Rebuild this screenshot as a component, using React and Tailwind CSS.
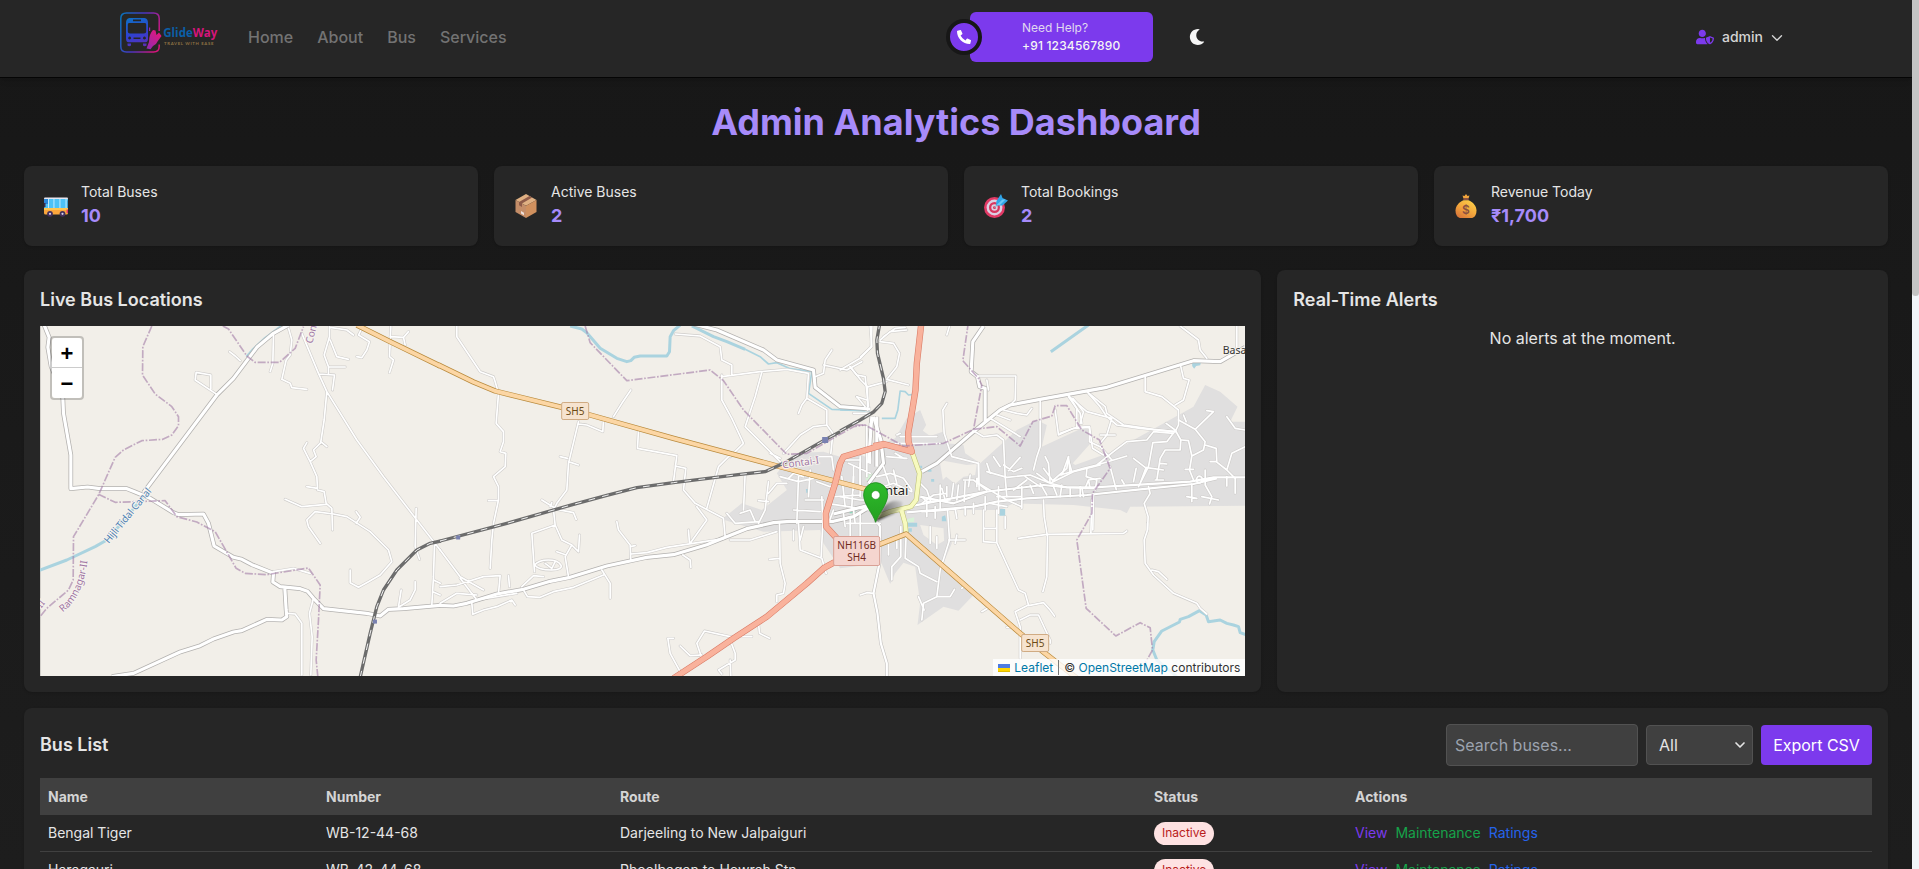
import React from "react";
import { FaMoon, FaPhoneAlt, FaUserShield } from "react-icons/fa";
import { ChevronDown } from "lucide-react";

/* ---------- Map data: each sheet has its own origin, three units per pixel ---------- */

const SHEETS = {
  a: "translate(0 260) scale(0.33333)",
  b: "translate(440 310) scale(0.33333)",
  c: "translate(840 310) scale(0.33333)",
  d: "translate(1060 370) scale(0.33333)",
  e: "translate(840 400) scale(0.33333)",
};

const LAND = {
  b: "M1010 490L1060 430L1150 425L1200 440L1320 400V760L1200 775L1150 700L1140 660L970 665L845 628L905 580L965 600L1040 540Z",
  c: "M0 440L130 400L165 385L200 325L240 300L258 345L248 362L270 378L308 365L320 400L370 405L375 430L420 460L530 360L590 330L620 345L605 410L740 348L760 390L698 460L705 465L830 420L880 390L1060 290L1095 225L1140 245L1192 290L1170 335H1215V587L870 590L860 610L840 600L700 585L520 580L480 600H320L335 700L310 760L400 855L355 902L310 890L232 945L240 880L225 770L190 758L165 790L150 822L120 750L0 770Z",
};
const CLEARINGS = {
  c: "M298 450L380 465L410 462L405 495L370 500L345 522L318 500L308 510ZM240 645L310 655L312 692L290 705L250 675Z",
  b: "M1265 410L1290 425L1275 440L1250 430Z",
};
const PARKS = { c: "M75 495L90 487L98 492L88 515L78 510ZM202 627L222 622V636L200 638Z" };
const POOL = { b: "M1228 602L1240 596L1252 598L1242 610H1228Z" };
const PONDS = {
  c: "M478 597h17v20h-17zM305 620l10 -4l4 18h-14zM203 638h28v12h-28zM205 655h10v10h-10zM1056 156l26 2l-2 8l-12 2l-6 8l-6 -8zM262 478h12v7h-12zM273 507h9v8h-9zM240 467h6v8h-6z",
  b: "M1097 537h12v12h-10z",
};
const RIVER = {
  a: "M845 198L795 235L760 268L740 290M445 690L385 765L320 840L285 860L200 900L115 932",
  b: "M390 48L425 57L440 68L480 115L530 145L560 155L572 152L582 142L600 138H680L688 125L690 80L700 62L720 45M755 48L820 80L860 95L915 118",
  c: "M632 125L745 45M1220 975L1200 968L1195 950L1180 945L1160 940L1140 930L1105 935L1098 915L1078 902L1045 920L1020 928L1018 936L965 963L942 995L938 1020L950 1050L1010 1100",
};
const STREAM = {
  b: "M915 118L960 140L985 162L1010 158L1050 176L1115 185L1105 250L1175 298L1290 302",
  c: "M0 300L75 302M125 325H165L173 300L180 243L195 245L205 255L222 253",
};
const MINOR = {
  a: "M862 1060L885 1062L905 1090V1245M940 1015L928 1060L936 1130L932 1245M688 275L705 288L720 302M650 403L585 360L588 337L632 345V388M820 220L818 310L810 335M865 205L875 240L870 285L858 300L845 358L870 370L875 383L920 388M905 220L955 340L980 395L1070 540L1150 650L1250 780L1320 870M988 200V230L972 285L985 320V340M955 342L1003 345L997 390M990 240L1010 290L1045 298M985 321H1035M990 202L1040 210L1060 225M1085 205L1075 225L1108 245L1100 270L1085 293L1070 290M1172 200L1168 290L1180 300L1168 338M1170 230L1210 232L1225 215M1210 232L1215 255M980 395L972 480L962 545L980 560M962 548L940 570L948 590L930 605L910 565L920 548M930 605L950 650L952 685L920 680M952 690L972 695L978 730L995 745L997 810M855 718L905 740L978 733M960 850L925 800L920 780L945 755L1000 762L1040 770L1110 815L1165 870L1175 905L1140 945L1105 965L1075 982L1050 968V930M1068 755L1080 772L1068 790M1248 745L1245 860L1258 898M1303 850L1300 950L1295 1035M1195 1042L1230 1020L1245 990V965M1195 1040L1203 990M1300 960L1320 970M1298 995L1320 1005M820 935L880 925L930 940",
  b: "M50 48V80L120 185L160 200L165 215L175 250L168 340L190 365V395L180 425L197 430L195 470L160 500L175 530V570L160 640L155 690L150 775M145 572H175M572 240L545 280L520 320M415 335L385 460L380 540L350 580L340 600L345 645L275 670L283 785M415 342L440 345L488 365L490 325M385 455L415 465M382 445L360 440M345 645L365 690L395 705L375 740L385 800M395 705L415 725L418 675M350 725L378 735M305 570L350 598L400 608L408 628M330 590L335 578M283 765C300 745 350 745 362 765S300 785 283 765M315 760L335 775L345 755M595 360L592 415L710 437L700 515M705 468L737 475L730 540L765 580L850 625L855 680M530 635L535 660L570 705L572 750M570 710L585 707M572 732L620 728L680 712L850 686M800 595L835 470L865 440M750 700L800 630L770 590M745 660L748 700M728 735L750 750L752 772M845 195V270L875 325L910 400L870 440M705 72L780 78L840 110L845 150L875 165V195M845 200L960 185L1040 178L1105 190L1100 265L1160 300V345L1120 350L1080 375L1030 430M965 187L945 260L915 350L990 425L1020 455M1100 265L1085 285L1075 310M1160 345L1178 370L1172 430M870 690L930 690L1010 665M910 600L915 490M985 515L975 600L955 640M955 572L985 575M1018 640L1020 760L1035 820L1030 850L1010 855V875M988 748L1018 745M1075 640L1080 720L1145 745L1158 790M1145 560L1148 640L1143 740M0 720L60 800L130 840M0 830L50 825L130 800L180 797L175 850M60 805L110 870L230 850M0 880L50 850L110 855M95 880L98 913L130 900L170 890L215 870L225 885M250 840L262 860L300 862L340 845L400 832L490 795M485 780L510 820V865M205 797L208 830M245 830L280 797L310 800M720 1085L690 1030L683 985H700M785 1045L770 1000L793 963L870 980H935M720 1008L750 1037L785 1035M870 990L885 1030V1050L835 1080L845 1092M870 1050L872 1098M955 940L958 970L988 985M1175 120L1155 150L1150 190L1125 200M1150 165L1220 180L1265 155M1230 170L1262 210L1282 230V300M1290 48L1295 110L1262 140M1250 260L1275 290M1240 310H1290M1020 500L1075 515L1120 505M1045 505L1060 490L1090 500M1075 500L1070 640M1095 570H1150M1060 600L1140 605M1110 480L1105 560M1130 515L1170 530L1190 525M1185 560L1260 555M1205 500L1215 590M1240 500L1235 590M1160 580L1290 600M1180 600L1165 640M1210 610L1215 650M1240 600L1245 640M1260 460V560M1225 460L1290 490M1280 350V500M1290 340V460M1040 520L1010 520L985 550M1130 440L1175 440L1180 480M990 430L1020 445M1060 660V690M1090 650L1080 690M860 610L885 640L955 635M900 610L930 600L945 635",
  c: "M120 95L160 100L178 130L170 170L140 208L205 225M120 90L150 65L200 60M130 80L165 55L195 52M85 230L140 215M95 48L93 110L60 145L0 180M30 170L50 195L75 200L85 290M50 260L80 270M320 280L308 300L312 370L335 440L415 460L417 540M328 48L320 75M415 198H527L525 270L510 285M440 210L445 240M450 325L540 380M470 315L510 330M490 300L530 310L560 315L575 295M400 362L430 380L470 375L490 390L495 500L500 560M600 270L600 410L590 440L580 480M645 300L655 375L700 355L748 352V395L780 410L815 450M685 260L720 310L725 340M915 200V245L965 260L1015 300V345L1005 365L900 355L830 345L800 320L780 290L745 250M690 262L740 305L815 325L800 375L780 400M780 375H825M1022 170L1030 205L1047 210L1030 270L1005 285M1020 48L1075 90L1080 120L1100 145M1190 48V120M922 640V660L912 690L915 760L940 795L1000 850L1070 880L1080 895L1100 912M935 780L955 785L980 808M610 570L612 620L622 680L620 800L608 845M535 685L620 673L850 670L860 663M755 570L752 672M430 600V695L470 698V655H432M470 600V655M470 698L535 840L555 850L565 885L525 905L540 950V1045M565 887L610 878L630 900L643 918M540 930L570 915H595L630 990V1000M322 600L328 690L300 780L290 860L250 880L245 930M290 860L330 860L343 838M290 815L240 790L235 770L195 745L198 672M235 860L252 900M182 650V740L155 770V810M325 690H375M350 675L345 700M495 620V655M60 855L80 848L100 850M365 835L375 825M425 905L450 890M500 952H520M145 690V735M170 690V715M165 400H300M165 430L190 445M180 380H290M170 375L180 370M0 450H60M40 470V540M60 440V530M100 540L160 520L215 545M110 500L150 490L190 505L215 540M130 470L150 530M160 480L170 520M0 560L60 570M30 620V680M60 610V680M20 640H120M270 650V700M290 680V715M110 570H60M140 440L200 445",
  d: "M0 190L50 172L88 170L97 235L130 255M25 75L50 115V170M38 85L70 125L60 160M318 160L345 180L362 210L360 240H315L300 265L290 330M345 182L320 215L278 218L265 290L235 350M0 315L70 295L110 285L200 258M110 285L160 245L200 215L260 210L280 185L340 190M80 65L135 110L140 130L190 165L280 178L345 185M355 150L405 178L460 125L440 122M370 135L378 155M405 178L435 215L430 240L395 258L388 300L400 330M435 225L468 235L470 275H450M468 275L500 300L525 325V370M500 300L515 250L555 230M500 140L525 175L555 180M365 210L385 212L395 258M80 298L78 320L110 330L105 360M150 290L168 358M220 265L255 292L310 300M228 295L220 335M300 280L320 282M285 330H310M395 342V395M380 380L410 385M435 300V345L455 380L448 402M425 380L475 390M500 320V348M375 298H400M185 330L192 342M240 340L258 292M25 260L5 315M25 262L30 308M265 350L270 370L252 400L264 440L262 480M410 325C415 312 430 320 425 333S405 335 410 325M65 352L70 380M100 372L98 480",
  e: "M415 190V250L440 265L500 300L545 320M370 240H400L440 270M505 212L540 172M490 195L520 215L545 205M440 215L500 232L570 225L630 250M630 250L625 190L615 170M640 245L610 205M640 240L680 205L685 170M685 180L695 215M630 250L590 220M630 250L680 262L760 265M630 250L700 215L760 200L780 195M545 325V260M475 260V340M435 290V330M340 250L335 290M355 255L350 300M375 245L372 305M320 260V290M300 255V330M270 300L260 270L240 250M245 310L280 285L320 280M245 335L300 332L360 325M390 225L385 260M410 235V260M260 310V350M285 320V355M345 325L350 355M375 320V345M400 310V340M520 270L560 240M555 230L600 260M570 255L580 280M600 250L620 285M640 260L650 285M665 255L660 290M690 265V290M720 260V290M745 240L750 265M450 220L440 190M460 170L480 200M470 290H545M450 310L500 320M245 290L260 305L330 300M305 265L315 300M735 265L745 240L780 235",
};
const TERTIARY = {
  a: "M130 190L147 232L143 262L153 320L175 370L188 415L190 460L212 585V686L262 681L300 686H380L405 696L450 715L520 758L535 764L610 762L625 790L642 858L700 892L725 898L755 914L805 934L820 940L818 966L840 980L900 986L922 994L940 1015L970 1046L1100 1060L1140 1068L1165 1048L1210 1046L1320 1036M865 195L820 220L770 262L700 355L650 405L430 698M335 1250L400 1240L540 1176L600 1157L640 1137L700 1116L725 1112L800 1078L845 1080L860 1070L858 1050L854 985",
  b: "M-5 886L40 888L80 880L170 852L250 838L330 814L390 802L500 768L620 742L700 734L800 704L850 684L920 656L1000 638L1050 634H1180L1240 620L1290 590M760 42L830 60L970 120L1010 150L1120 180L1125 232L1200 290L1290 297M1180 612L1290 585M1295 320L1285 460M1310 320V470",
  c: "M85 520L130 460L122 390L100 320M245 485L290 460L400 365L480 300L510 285L600 268L800 232L1060 152L1140 155L1215 112M430 48L398 95L393 185L412 200L418 230L435 235V335",
};
const HIGHSTREET = {
  c: "M205 590L440 545L610 525L680 532L760 532L1050 515L1120 502H1215M200 607L400 590L470 575L560 565L740 555L900 538L1060 522L1130 505M240 560L340 580L440 545M106 630L120 650L118 760L100 850L112 910L122 1000L140 1060V1098",
};
const SECONDARY = { c: "M215 425L238 490L228 570L212 590L183 597L195 640L198 672M183 597L150 605L106 622" };
const PRIMARY = {
  a: "M1070 195L1170 245L1320 318",
  b: "M-5 165L100 216L165 243L365 292L450 315L700 385L1000 465L1275 537L1320 555",
  c: "M100 710L198 672L540 970L615 1030L720 1112",
};
const TRUNK = {
  b: "M1335 403L1210 440L1200 460L1185 520L1157 610L1158 650L1190 685M1215 755L1180 758L1150 775L1100 820L980 920L880 985L800 1040L700 1105",
  c: "M243 44L230 160L226 240L218 290L204 370L205 395L215 425L130 402L100 408",
};
const RAIL = {
  a: "M1080 1252L1110 1120L1130 1040L1150 990L1190 930L1250 870L1290 850L1322 843",
  b: "M0 693L200 640L400 583L500 556L590 533L700 518L900 493L975 485L1030 460L1150 392L1200 365",
  c: "M0 363L60 330L100 306L125 280L135 245L130 205L112 130L110 90L118 45",
};
const BORDER = {
  a: "M455 198L428 260L427 345L465 402L515 440L535 470V497L515 525L488 538L425 542L370 570L345 592L295 705L220 830L219 960L205 990L140 1045L118 1072M295 703L345 727L495 722L530 770L590 786L645 815L708 925L735 940L800 944L925 924L960 975L955 1080L948 1200L953 1250M668 198L685 207L740 288L765 307H838L885 265L910 200",
  b: "M435 48L450 98L560 212L810 180L850 212L910 300L1040 433L1100 430L1240 350L1275 345",
  c: "M45 345H75L190 408L310 400L400 358L425 225L415 205L368 152L383 48M400 358L470 350L540 408L578 335L635 318L645 287H680L725 360L778 390L810 475L757 550L755 610L710 690L738 895L827 978L900 938L930 953L937 1020L915 1060",
};

function Area({ data, fill }) {
  return Object.entries(data).map(([sheet, d]) => (
    <path key={sheet} d={d} fill={fill} transform={SHEETS[sheet]} />
  ));
}

function Line({ data, color, width, dash, opacity, cap = "butt" }) {
  return Object.entries(data).map(([sheet, d]) => (
    <path
      key={sheet}
      d={d}
      fill="none"
      stroke={color}
      strokeWidth={width}
      strokeDasharray={dash}
      strokeLinejoin="round"
      strokeLinecap={cap}
      opacity={opacity}
      transform={SHEETS[sheet]}
    />
  ));
}

function Shield({ x, y, w, h, lines, fill, stroke, color }) {
  return (
    <g>
      <rect x={x} y={y} width={w} height={h} rx="1.5" fill={fill} stroke={stroke} />
      {lines.map((t, i) => (
        <text key={t} x={x + w / 2} y={y + 12.3 + i * 12} textAnchor="middle" fontSize="10" fill={color}>
          {t}
        </text>
      ))}
    </g>
  );
}

function MapCanvas() {
  return (
    <svg viewBox="40 326 1205 350" className="block h-[350px] w-full" fontFamily="'Noto Sans', sans-serif">
      <defs>
        <linearGradient id="pin" x1="0" y1="0" x2="0" y2="1">
          <stop offset="0" stopColor="#2fbb2c" />
          <stop offset="1" stopColor="#239f20" />
        </linearGradient>
        <linearGradient id="shade" gradientUnits="userSpaceOnUse" x1="876" y1="521" x2="903" y2="503">
          <stop offset="0" stopColor="#000" stopOpacity="0.75" />
          <stop offset="1" stopColor="#000" stopOpacity="0.08" />
        </linearGradient>
        <filter id="soft" x="-30%" y="-30%" width="160%" height="160%">
          <feGaussianBlur stdDeviation="1" />
        </filter>
        <path id="ramnagar" d="M62.5 612.5Q83 597 87.5 560" />
      </defs>
      <rect x="40" y="326" width="1205" height="350" fill="#f2efe9" />
      <Area data={LAND} fill="#e0dfdf" />
      <Area data={CLEARINGS} fill="#f2efe9" />
      <Area data={PARKS} fill="#d8f2d8" />
      <Area data={POOL} fill="#8adcc0" />
      <Area data={PONDS} fill="#aad3df" />
      <Line data={RIVER} color="#aad3df" width="9" />
      <Line data={STREAM} color="#aad3df" width="5" />
      <Line data={MINOR} color="#cfcdcb" width="8.5" cap="round" />
      <Line data={HIGHSTREET} color="#c4c2c0" width="10" />
      <Line data={TERTIARY} color="#b3b1af" width="14" />
      <Line data={MINOR} color="#ffffff" width="5" cap="round" />
      <Line data={HIGHSTREET} color="#ffffff" width="6.5" />
      <Line data={TERTIARY} color="#ffffff" width="9.5" />
      <Line data={SECONDARY} color="#b9bd72" width="15" />
      <Line data={SECONDARY} color="#f7fabf" width="12" />
      <Line data={PRIMARY} color="#b98a3c" width="16" />
      <Line data={PRIMARY} color="#fcd6a4" width="12" />
      <Line data={TRUNK} color="#d97b66" width="19" />
      <Line data={TRUNK} color="#f9b29c" width="15.5" />
      <Line data={RAIL} color="#6c6c6c" width="10" />
      <Line data={RAIL} color="#f4f4f4" width="3" dash="20 22" />
      <Line data={BORDER} color="#a27ba6" width="5" dash="24 5 5 5" opacity="0.6" />
      <g fill="#7981b0">
        <rect x="372.8" y="619.6" width="4" height="4" />
        <rect x="456" y="535.5" width="4" height="4" />
        <rect x="822" y="437" width="6" height="6" />
      </g>

      <g stroke="#f6f3ee" strokeWidth="2" paintOrder="stroke" strokeLinejoin="round" fontSize="10">
        <text transform="translate(108.5 544) rotate(-50.5)" fill="#4d80b3" textLength="68">
          Hijli Tidal Canal
        </text>
        <g fill="#9f76a4">
          <text>
            <textPath href="#ramnagar">Ramnagar-II</textPath>
          </text>
          <text transform="translate(39 611) rotate(-52)">-II</text>
          <text transform="translate(312 344) rotate(-76)">Contai-I</text>
          <text transform="translate(782.5 468.5) rotate(-8)" textLength="37">
            Contai-I
          </text>
        </g>
        <text x="1222.5" y="354" fontSize="10.5" fill="#333">
          Basantia
        </text>
        <text x="908.3" y="495" fontSize="13" textAnchor="end" fill="#222">
          Contai
        </text>
      </g>

      <Shield x={561.5} y={402.5} w={27} h={17} lines={["SH5"]} fill="#f6e3cf" stroke="#d0ab83" color="#6b4b16" />
      <Shield x={1021.5} y={634.5} w={27} h={17} lines={["SH5"]} fill="#f6e3cf" stroke="#d0ab83" color="#6b4b16" />
      <Shield x={833.5} y={536.5} w={46} h={29} lines={["NH116B", "SH4"]} fill="#f5d5cf" stroke="#d9a095" color="#6f2a1e" />

      <path d="M875 522L884 506Q893 498 902 502Q904 508 893 514Z" fill="url(#shade)" filter="url(#soft)" />
      <path
        d="M875.5 522.3C873 514 863.4 504 863.4 494.7A12.1 12.1 0 0 1 887.6 494.7C887.6 504 878 514 875.5 522.3Z"
        fill="url(#pin)"
        stroke="#1f8a1d"
        strokeWidth="0.8"
      />
      <circle cx="875.5" cy="495" r="4.3" fill="#fff" stroke="#1f8a1d" strokeWidth="0.5" />
    </svg>
  );
}

/* ---------- Icons ---------- */

function Logo() {
  return (
    <svg viewBox="120 12 98 41" className="h-[41px] w-[98px]">
      <defs>
        <linearGradient id="brand" gradientUnits="userSpaceOnUse" x1="120" y1="20" x2="160" y2="34">
          <stop offset="0" stopColor="#0b70ba" />
          <stop offset="0.5" stopColor="#4a35c0" />
          <stop offset="1" stopColor="#d6157c" />
        </linearGradient>
        <linearGradient id="brandBus" gradientUnits="userSpaceOnUse" x1="130" y1="18" x2="140" y2="48">
          <stop offset="0" stopColor="#0f6fc6" />
          <stop offset="0.55" stopColor="#3140d0" />
          <stop offset="1" stopColor="#5e2fb8" />
        </linearGradient>
        <linearGradient id="brandHand" gradientUnits="userSpaceOnUse" x1="146" y1="48" x2="160" y2="34">
          <stop offset="0" stopColor="#8f2bb0" />
          <stop offset="1" stopColor="#e0177f" />
        </linearGradient>
      </defs>
      <path
        d="M159.2 31V18.500Q159.200 12.900 153.500 12.900H126.500Q120.800 12.900 120.800 18.500V46.500Q120.800 52 126.500 52H153.500Q159.200 52 159.200 46.500V44.500"
        fill="none"
        stroke="url(#brand)"
        strokeWidth="1.5"
      />
      <path
        fillRule="evenodd"
        fill="url(#brandBus)"
        d="M129.500 18H144.500Q148 18.500 148 23V38.500Q148 42 145.500 42.300H128.500Q126 42 126 38.500V23Q126 18.500 129.500 18ZM133 19.600V21.200H141V19.600ZM129 23Q127.800 23 127.800 24.500V31.500Q127.800 33.500 130 33.500H144Q146.200 33.500 146.200 31.500V24.500Q146.200 23 145 23ZM129.600 36.600a1.500 1.500 0 1 0 0.100 0ZM144.400 36.600a1.500 1.500 0 1 0 0.100 0ZM133.500 37.500V39H140.500V37.500Z"
      />
      <path d="M127.500 43.500H131V45.500Q129.200 47 127.500 45.500ZM143 43.500H146.500V45.500Q144.700 47 143 45.500Z" fill="url(#brandBus)" />
      <path d="M149 27.500H150.200V31H149Z" fill="#8f2bb0" />
      <path
        d="M146.500 48.500L149 42Q149 34 153 30L155.500 30.500L156.500 35L159 32.500L161.500 36L157.500 41.500Q156.500 44.500 153 46L150.500 49.200Z"
        fill="url(#brandHand)"
      />
      <text x="163.300" y="37.200" fontFamily="'Open Sans', sans-serif" fontWeight="700" fontSize="13" textLength="54" lengthAdjust="spacingAndGlyphs">
        <tspan fill="#0b5fa8">Glide</tspan>
        <tspan fill="#d6157c">Way</tspan>
      </text>
      <text x="164" y="45.200" fontFamily="Lato, sans-serif" fontWeight="700" fontSize="4.300" fill="#8f7344" textLength="49.500">
        TRAVEL WITH EASE
      </text>
    </svg>
  );
}

function BusIcon() {
  return (
    <svg viewBox="0 0 24 24" className="size-6">
      <rect x="0" y="3.500" width="24" height="3" rx="1" fill="#e8e6f0" />
      <rect x="0.300" y="5" width="23.500" height="9.500" fill="#4cc2f5" />
      <path d="M0 5h4v5H0z" fill="#2a86d8" />
      <path d="M4 5h.9v9H4zM9.500 5h.9v9h-.9zM15.500 5h.9v9h-.9zM21.600 5h.9v9h-.9z" fill="#cfefff" />
      <path d="M0 9h1.500v4H0z" fill="#3a2b50" />
      <path d="M0 14h24V19q0 1.500-1.500 1.500h-21Q0 20.500 0 19z" fill="#fba63c" />
      <path d="M0 14h24v2H0z" fill="#ffc650" />
      <path d="M22.600 15.500H24V19h-1.400z" fill="#e2336b" />
      <circle cx="6" cy="19.800" r="2.900" fill="#43305e" />
      <circle cx="6" cy="19.800" r="1.100" fill="#d9d2e8" />
      <circle cx="18.500" cy="19.800" r="2.900" fill="#43305e" />
      <circle cx="18.500" cy="19.800" r="1.100" fill="#d9d2e8" />
    </svg>
  );
}

function BoxIcon() {
  return (
    <svg viewBox="0 0 24 24" className="size-6">
      <path d="M12 0L22.500 6L12 11.800L1.500 6Z" fill="#dfb083" />
      <path d="M1.500 6L12 11.800V24L1.500 18Z" fill="#c48d68" />
      <path d="M22.500 6L12 11.800V24L22.500 18Z" fill="#d0905e" />
      <path d="M15.500 2L18.200 3.500L8 9.600V13L5 11.300V8Z" fill="#8e5b49" />
      <path d="M7 17l3 1.700v2.600L7 19.600z" fill="#efe1dc" />
    </svg>
  );
}

function TargetIcon() {
  return (
    <svg viewBox="0 0 24 24" className="size-6">
      <circle cx="10.500" cy="13.500" r="10.500" fill="#e23a66" />
      <circle cx="10.500" cy="13.500" r="7.900" fill="#dccfe2" />
      <circle cx="10.500" cy="13.500" r="5.500" fill="#d8365f" />
      <circle cx="10.500" cy="13.500" r="3.200" fill="#dccfe2" />
      <circle cx="10.500" cy="13.500" r="1.500" fill="#d8365f" />
      <path d="M10.500 13.500L18 6" stroke="#a9b3c4" strokeWidth="1.300" />
      <path d="M12 11.500L12.500 7L17 0L18.500 4L24 6.500L18.500 11.500Z" fill="#2fa4e8" />
      <path d="M12 11.500L18.500 5.500L21.500 5.500L16 11Z" fill="#6dc7f6" />
    </svg>
  );
}

function MoneyBagIcon() {
  return (
    <svg viewBox="0 0 24 24" className="size-6">
      <defs>
        <linearGradient id="bag" x1="1" y1="0" x2="0.300" y2="1">
          <stop offset="0" stopColor="#ffd84a" />
          <stop offset="0.600" stopColor="#f2a53c" />
          <stop offset="1" stopColor="#d9793a" />
        </linearGradient>
      </defs>
      <path d="M8.500 1.500L10.500 2L12 0L13.500 2L15.500 1.500L14.500 4.500H9.500Z" fill="#f2a53c" />
      <rect x="9.300" y="4.300" width="5.400" height="1.900" rx="0.800" fill="#8a5146" />
      <path d="M9.500 6.200H14.500C19 8 22.500 12 22.500 16.500C22.500 21.500 20 24 17 24H7C4 24 1.500 21.500 1.500 16.500C1.500 12 5 8 9.500 6.200Z" fill="url(#bag)" />
      <text x="12" y="20" textAnchor="middle" fontFamily="Inter, sans-serif" fontWeight="600" fontSize="12" fill="#8a5040">
        $
      </text>
    </svg>
  );
}

/* ---------- Page ---------- */

const STATS = [
  { label: "Total Buses", value: "10", Icon: BusIcon },
  { label: "Active Buses", value: "2", Icon: BoxIcon },
  { label: "Total Bookings", value: "2", Icon: TargetIcon },
  { label: "Revenue Today", value: "₹1,700", Icon: MoneyBagIcon },
];

const BUSES = [
  { name: "Bengal Tiger", number: "WB-12-44-68", route: "Darjeeling to New Jalpaiguri" },
  { name: "Haragauri", number: "WB-42-44-68", route: "Phoolbagan to Howrah Stn" },
];

function Header() {
  return (
    <header className="flex h-[78px] shrink-0 items-start border-b border-[#050505] bg-[#262626] pl-[120px] shadow-md">
      <div className="flex w-[826px] items-start pt-3">
        <Logo />
        <nav className="ml-[30px] mt-[13px] flex gap-6 text-base font-medium text-[#737373]">
          <a>Home</a>
          <a>About</a>
          <a>Bus</a>
          <a>Services</a>
        </nav>
      </div>
      <div className="mt-3 flex h-[50px] items-center">
        <div className="z-10 flex size-9 shrink-0 items-center justify-center rounded-full border-4 border-[#171717] bg-[#7c3aed] text-white">
          <FaPhoneAlt size={14} />
        </div>
        <div className="-ml-3 flex h-[50px] w-[183px] flex-col justify-center rounded-md bg-[#7c3aed] pl-[52px] text-xs leading-[18px] text-[#e0d8f0]">
          <span>Need Help?</span>
          <span className="font-medium tracking-[0.17px] text-[#f5f5f5]">+91 1234567890</span>
        </div>
        <FaMoon size={16} className="ml-[36px] text-[#f5f5f5]" />
      </div>
      <div className="ml-auto mr-[126px] mt-[27px] flex items-center text-sm font-medium text-[#d4d4d4]">
        <FaUserShield size={18} className="mr-2 text-[#7c3aed]" />
        admin
        <ChevronDown size={18} strokeWidth={1.8} className="ml-[5px] mt-0.5" />
      </div>
    </header>
  );
}

function LiveMap() {
  return (
    <div className="relative h-[350px] overflow-hidden">
      <MapCanvas />
      <div className="absolute left-[10px] top-[10px] w-[34px] rounded border-2 border-black/20 bg-clip-padding text-center font-['Liberation_Sans',sans-serif] text-[22px] font-bold leading-[32px] text-black">
        <div className="h-[30px] rounded-t-sm border-b border-[#ccc] bg-white">+</div>
        <div className="h-[30px] rounded-b-sm bg-white">−</div>
      </div>
      <div className="absolute bottom-0 right-0 flex h-[17px] items-center bg-white/80 px-[5px] text-xs leading-[17px] text-[#333]">
        <svg viewBox="0 0 12 8" className="mr-1 h-2 w-3">
          <path fill="#4C7BE1" d="M0 0h12v4H0z" />
          <path fill="#FFD500" d="M0 4h12v3H0z" />
          <path fill="#E0BC00" d="M0 7h12v1H0z" />
        </svg>
        <span className="text-[#0078a8]">Leaflet</span>
        <span className="mx-[5px] h-[15px] w-px bg-[#777]" />
        <span>
          © <span className="text-[#0078a8]">OpenStreetMap</span> contributors
        </span>
      </div>
    </div>
  );
}

const COLUMNS = "grid grid-cols-[278px_294px_534px_201px_1fr] items-center";

function BusList() {
  return (
    <section className="mt-4 rounded-lg bg-[#262626] p-4 shadow">
      <div className="flex h-[42px] items-center gap-2">
        <h2 className="mr-auto text-lg font-semibold">Bus List</h2>
        <div className="flex h-[42px] w-48 items-center rounded border border-[#525252] bg-[#404040] px-2 text-base text-[#9ca3af]">
          Search buses...
        </div>
        <div className="flex h-10 w-[107px] items-center justify-between rounded border border-[#525252] bg-[#404040] pl-3 pr-1 text-base text-[#e5e5e5]">
          All
          <ChevronDown size={16} strokeWidth={2.5} />
        </div>
        <button className="h-10 w-[111px] whitespace-nowrap rounded bg-[#7c3aed] text-base text-white">Export CSV</button>
      </div>
      <div className="mt-3 text-sm text-[#e5e5e5]">
        <div className={`${COLUMNS} h-[37px] bg-[#404040] px-2 font-bold text-[#d4d4d4]`}>
          <span>Name</span>
          <span>Number</span>
          <span>Route</span>
          <span>Status</span>
          <span>Actions</span>
        </div>
        {BUSES.map((bus) => (
          <div key={bus.name} className={`${COLUMNS} h-[37px] border-b border-[#404040] px-2`}>
            <span>{bus.name}</span>
            <span>{bus.number}</span>
            <span>{bus.route}</span>
            <span>
              <span className="inline-flex h-[23px] items-center rounded-full bg-[#fee2e2] px-2 text-xs text-[#b91c1c]">Inactive</span>
            </span>
            <span className="flex gap-2">
              <a className="text-[#7c3aed]">View</a>
              <a className="text-[#16a34a]">Maintenance</a>
              <a className="text-[#2563eb]">Ratings</a>
            </span>
          </div>
        ))}
      </div>
    </section>
  );
}

export default function App() {
  return (
    <div className="flex h-[869px] w-full overflow-hidden bg-linear-to-b from-[#171717] to-[#1d1d1d] font-[Inter,sans-serif] text-[#e5e5e5]">
      <div className="flex min-w-0 flex-1 flex-col">
        <Header />
        <main className="px-6 pt-6">
          <h1 className="mb-6 text-center text-4xl font-bold text-[#a78bfa]">Admin Analytics Dashboard</h1>
          <div className="grid grid-cols-4 gap-4">
            {STATS.map(({ label, value, Icon }) => (
              <div key={label} className="flex h-20 items-center rounded-lg bg-[#262626] p-4 shadow">
                <span className="ml-1 mr-[13px]">
                  <Icon />
                </span>
                <div>
                  <p className="text-sm">{label}</p>
                  <p className="text-lg font-bold text-[#a78bfa]">{value}</p>
                </div>
              </div>
            ))}
          </div>
          <div className="mt-6 grid grid-cols-3 gap-4">
            <section className="col-span-2 rounded-lg bg-[#262626] p-4 shadow">
              <h2 className="mb-3 text-lg font-semibold">Live Bus Locations</h2>
              <LiveMap />
            </section>
            <section className="rounded-lg bg-[#262626] p-4 shadow">
              <h2 className="mb-3 text-lg font-semibold">Real-Time Alerts</h2>
              <p className="text-center">No alerts at the moment.</p>
            </section>
          </div>
          <BusList />
        </main>
      </div>
      <div className="h-full w-[7px] shrink-0 bg-slate-100">
        <div className="h-[296px] rounded-b bg-[#c4c4c4]" />
      </div>
    </div>
  );
}
